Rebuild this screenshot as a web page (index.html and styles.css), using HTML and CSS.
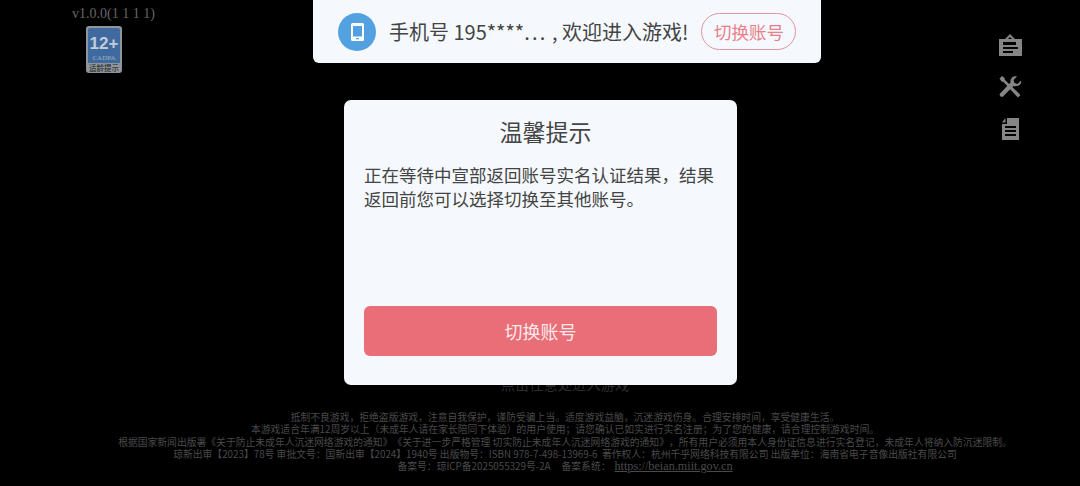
FILE: index.html
```html
<!DOCTYPE html>
<html lang="zh-CN">
<head>
  <meta charset="UTF-8">
  <title>温馨提示</title>
  <link rel="stylesheet" href="styles.css">
</head>
<body>
  <div class="screen">
    <div class="version-col">
      <div class="version">v1.0.0(1 1 1 1)</div>
      <div class="age-badge">
        <div class="age-blue">
          <div class="age-num">12+</div>
          <div class="age-cadpa">CADPA</div>
        </div>
        <div class="age-tip">适龄提示</div>
      </div>
    </div>

    <div class="toast">
      <div class="toast-icon">
        <svg width="13" height="18" viewBox="0 0 13 18">
          <path fill="#fff" fill-rule="evenodd" d="M1.500 0h10A1.500 1.500 0 0 1 13 1.500v15a1.500 1.500 0 0 1-1.500 1.500h-10A1.500 1.500 0 0 1 0 16.500v-15A1.500 1.500 0 0 1 1.500 0zM2 3v10.500h9V3zM5 15v1.200h3V15z"/>
        </svg>
      </div>
      <span class="toast-text">手机号 195****<span class="toast-dots">...</span> , 欢迎进入游戏!</span>
      <span class="toast-btn">切换账号</span>
    </div>

    <div class="side-icons">
      <svg width="24" height="24" viewBox="0 0 24 24">
        <path fill="#858585" fill-rule="evenodd" d="M12 1l5 5h7v17H1V6h6zM10 6h4l-2-2zM5 9v3h13V9zM5 14v2h15v-2zM5 18v2h10v-2z"/>
      </svg>
      <svg width="24" height="24" viewBox="0 0 24 24">
        <path fill="#858585" d="M4 1L1.500 3.500l2 3 2 .5 12 13 2.500 2.500 2.500-2.500-2.500-2.500L7 5l-.5-2zM23 5.500l-3.500 3.500-3-1 -1-3L19 1.500c-3.500-.8-7 1.500-6.500 6L2 18.500c-1.500 1.500 1.500 4.500 3 3L15.500 11c4.500 1 8.500-1.500 7.500-5.500z"/>
      </svg>
      <svg width="24" height="24" viewBox="0 0 24 24">
        <path fill="#858585" fill-rule="evenodd" d="M9 1h12v22H4V7h5zM4 5.500L7.500 1v4.500zM7 9v2h11V9zM7 13v2h11v-2zM7 17v2h11v-2z"/>
      </svg>
    </div>

    <div class="bottom">
      <div class="enter-hint">点击任意处进入游戏</div>
      <div class="legal">
        <div>抵制不良游戏，拒绝盗版游戏，注意自我保护，谨防受骗上当。适度游戏益脑，沉迷游戏伤身。合理安排时间，享受健康生活。</div>
        <div>本游戏适合年满12周岁以上（未成年人请在家长陪同下体验）的用户使用；请您确认已如实进行实名注册；为了您的健康，请合理控制游戏时间。</div>
        <div>根据国家新闻出版署《关于防止未成年人沉迷网络游戏的通知》《关于进一步严格管理 切实防止未成年人沉迷网络游戏的通知》，所有用户必须用本人身份证信息进行实名登记，未成年人将纳入防沉迷限制。</div>
        <div>琼新出审【2023】78号 审批文号：国新出审【2024】1940号 出版物号：ISBN 978-7-498-13969-6&nbsp;&nbsp;著作权人：杭州千乎网络科技有限公司 出版单位：海南省电子音像出版社有限公司</div>
        <div>备案号：琼ICP备2025055329号-2A&nbsp;&nbsp;&nbsp;&nbsp;&nbsp;备案系统：<span class="legal-link">https://beian.miit.gov.cn</span></div>
      </div>
    </div>

    <div class="dialog">
      <div class="dialog-title">温馨提示</div>
      <div class="dialog-body">正在等待中宣部返回账号实名认证结果，结果返回前您可以选择切换至其他账号。</div>
      <div class="dialog-btn">切换账号</div>
    </div>
  </div>
</body>
</html>
```

FILE: styles.css
```css
* {
  box-sizing: border-box;
}
html, body {
  margin: 0;
  padding: 0;
  background: #000;
}
body {
  font-family: "Noto Sans CJK SC", "Noto Sans", sans-serif;
}
.screen {
  position: relative;
  width: 1080px;
  height: 486px;
  overflow: hidden;
  background: #000;
}
.version-col {
  position: absolute;
  top: 6px;
  left: 72px;
  display: flex;
  flex-direction: column;
  align-items: flex-start;
  gap: 4px;
}
.version {
  font-family: "Liberation Serif", serif;
  font-size: 14px;
  line-height: 16px;
  color: #666;
  white-space: nowrap;
}
.age-badge {
  width: 36px;
  height: 47px;
  margin-left: 14px;
  border-radius: 3px;
  background: #8f959b;
  padding: 2px;
  display: flex;
  flex-direction: column;
}
.age-blue {
  height: 35px;
  border-radius: 2px 2px 0 0;
  background: #3f6a9f;
  text-align: center;
  flex: none;
}
.age-num {
  font-family: "Liberation Sans", sans-serif;
  font-weight: 700;
  font-size: 17px;
  line-height: 20px;
  margin-top: 6px;
  color: #c3cdd8;
}
.age-cadpa {
  font-family: "Liberation Serif", serif;
  font-size: 7px;
  line-height: 8px;
  color: #9fb0c4;
}
.age-tip {
  font-size: 7.500px;
  line-height: 9px;
  text-align: center;
  color: #1c1c1c;
  white-space: nowrap;
}
.toast {
  position: absolute;
  top: 0;
  left: 313px;
  width: 508px;
  height: 63px;
  background: #f5f9fd;
  border-radius: 0 0 6px 6px;
  display: flex;
  align-items: center;
  padding: 0 25px;
}
.toast-icon {
  width: 38px;
  height: 38px;
  border-radius: 50%;
  background: #53a1e0;
  display: flex;
  align-items: center;
  justify-content: center;
  flex: none;
}
.toast-text {
  margin-left: 13px;
  font-size: 20px;
  line-height: 28px;
  color: #444;
  white-space: nowrap;
}
.toast-dots {
  letter-spacing: 2.200px;
}
.toast-btn {
  margin-left: 13px;
  width: 95px;
  height: 37px;
  border: 1px solid #e0949b;
  border-radius: 19px;
  color: #e87f88;
  font-size: 17.500px;
  display: flex;
  align-items: center;
  justify-content: center;
  flex: none;
}
.side-icons {
  position: absolute;
  top: 33px;
  left: 998px;
  display: flex;
  flex-direction: column;
  gap: 18px;
}
.side-icons svg {
  display: block;
}
.bottom {
  position: absolute;
  left: 50px;
  right: 0;
  top: 374px;
  text-align: center;
}
.enter-hint {
  font-family: "Noto Sans CJK SC", serif;
  font-size: 14.300px;
  line-height: 20px;
  color: #2e2e2e;
}
.legal {
  margin-top: 17px;
  font-family: "Noto Sans CJK SC", serif;
  font-size: 9.800px;
  line-height: 12.300px;
  color: #4a4a4a;
  white-space: nowrap;
  text-spacing-trim: space-all;
}
.legal-link {
  margin-left: 4px;
  font-family: "Liberation Serif", serif;
  font-size: 12.200px;
  text-decoration: underline;
}
.dialog {
  position: absolute;
  top: 100px;
  left: 344px;
  width: 393px;
  height: 285px;
  background: #f5f9fd;
  border-radius: 7px;
  padding: 0 20px 29px;
  display: flex;
  flex-direction: column;
}
.dialog-title {
  margin-top: 15px;
  padding-left: 10px;
  font-size: 23px;
  line-height: 32px;
  text-align: center;
  color: #444;
}
.dialog-body {
  margin-top: 16px;
  font-size: 17.500px;
  line-height: 24px;
  color: #444;
  flex: 1;
}
.dialog-btn {
  height: 50px;
  border-radius: 6px;
  background: #e96e78;
  color: #fbeaec;
  font-size: 18px;
  display: flex;
  align-items: center;
  justify-content: center;
}
```
